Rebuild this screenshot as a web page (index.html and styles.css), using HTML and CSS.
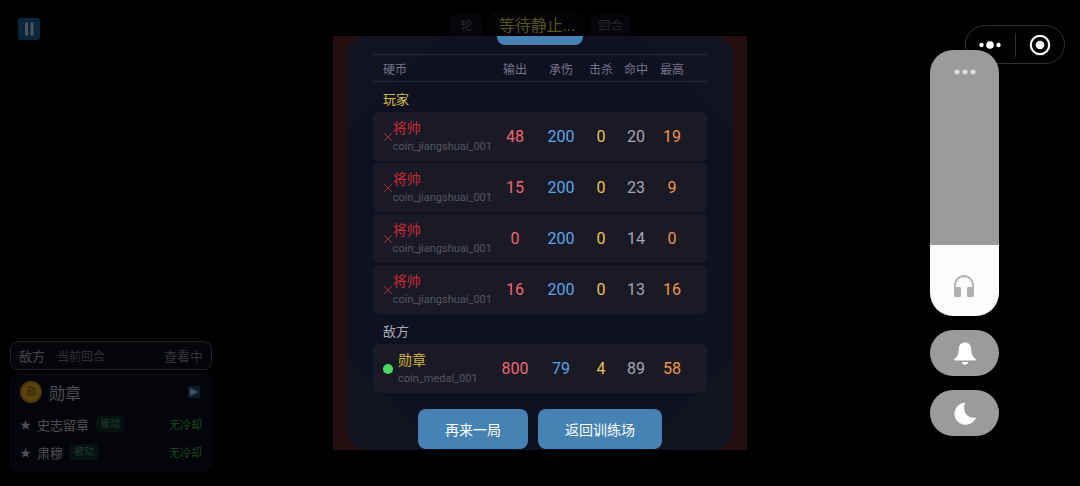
FILE: index.html
```html
<!DOCTYPE html>
<html lang="zh-CN">
  <head>
    <meta charset="UTF-8" />
    <meta name="viewport" content="width=device-width, initial-scale=1.0" />
    <title>训练场</title>
    <link rel="stylesheet" href="styles.css">
  </head>
  <body>
    <div class="screen">
      <aside class="left">
        <button class="pause" aria-label="暂停">
          <svg width="12" height="14" viewBox="0 0 12 14">
            <path d="M2 0.500h3v13H2zM7.500 0.500h3v13h-3z" fill="currentColor" />
          </svg>
        </button>

        <section class="enemy">
          <div class="turn-bar">
            <span class="turn-side">敌方</span>
            <span class="turn-label">当前回合</span>
            <span class="turn-state">查看中</span>
          </div>
          <div class="coin-card">
            <div class="coin-head">
              <span class="coin-badge">勋</span>
              <span class="coin-title">勋章</span>
              <button class="expand" aria-label="展开">
                <svg width="8" height="8" viewBox="0 0 8 8">
                  <path d="M0 0l8 4-8 4z" fill="currentColor" />
                </svg>
              </button>
            </div>
            <div class="skill">
              <span class="star">★</span>
              <span>史志留章</span>
              <span class="tag">被动</span>
              <span class="cooldown">无冷却</span>
            </div>
            <div class="skill">
              <span class="star">★</span>
              <span>肃穆</span>
              <span class="tag">被动</span>
              <span class="cooldown">无冷却</span>
            </div>
          </div>
        </section>
      </aside>

      <main class="center">
        <div class="status">
          <span class="pill">轮</span>
          <span class="pill pill-main">等待静止...</span>
          <span class="pill">回合</span>
        </div>

        <div class="board">
          <div class="result">
            <button class="btn btn-tab" aria-label="统计"></button>
            <table class="stats">
              <thead>
                <tr>
                  <th class="name">硬币</th>
                  <th class="wide">输出</th>
                  <th class="wide">承伤</th>
                  <th class="kill">击杀</th>
                  <th class="hit">命中</th>
                  <th class="last">最高</th>
                </tr>
              </thead>
              <tbody>
                <tr class="group player">
                  <th colspan="6">玩家</th>
                </tr>
                <tr class="row dead">
                  <td class="name">
                    <div class="coin">
                      <svg class="mark" width="10" height="10" viewBox="0 0 10 10"><path d="M1 1l8 8M9 1l-8 8" /></svg>
                      <div><b>将帅</b><small>coin_jiangshuai_001</small></div>
                    </div>
                  </td>
                  <td class="out">48</td>
                  <td class="taken">200</td>
                  <td class="kills">0</td>
                  <td class="hits">20</td>
                  <td class="max last">19</td>
                </tr>
                <tr class="row dead">
                  <td class="name">
                    <div class="coin">
                      <svg class="mark" width="10" height="10" viewBox="0 0 10 10"><path d="M1 1l8 8M9 1l-8 8" /></svg>
                      <div><b>将帅</b><small>coin_jiangshuai_001</small></div>
                    </div>
                  </td>
                  <td class="out">15</td>
                  <td class="taken">200</td>
                  <td class="kills">0</td>
                  <td class="hits">23</td>
                  <td class="max last">9</td>
                </tr>
                <tr class="row dead">
                  <td class="name">
                    <div class="coin">
                      <svg class="mark" width="10" height="10" viewBox="0 0 10 10"><path d="M1 1l8 8M9 1l-8 8" /></svg>
                      <div><b>将帅</b><small>coin_jiangshuai_001</small></div>
                    </div>
                  </td>
                  <td class="out">0</td>
                  <td class="taken">200</td>
                  <td class="kills">0</td>
                  <td class="hits">14</td>
                  <td class="max last">0</td>
                </tr>
                <tr class="row dead">
                  <td class="name">
                    <div class="coin">
                      <svg class="mark" width="10" height="10" viewBox="0 0 10 10"><path d="M1 1l8 8M9 1l-8 8" /></svg>
                      <div><b>将帅</b><small>coin_jiangshuai_001</small></div>
                    </div>
                  </td>
                  <td class="out">16</td>
                  <td class="taken">200</td>
                  <td class="kills">0</td>
                  <td class="hits">13</td>
                  <td class="max last">16</td>
                </tr>
                <tr class="group">
                  <th colspan="6">敌方</th>
                </tr>
                <tr class="row alive">
                  <td class="name">
                    <div class="coin">
                      <span class="dot"></span>
                      <div><b>勋章</b><small>coin_medal_001</small></div>
                    </div>
                  </td>
                  <td class="out">800</td>
                  <td class="taken">79</td>
                  <td class="kills">4</td>
                  <td class="hits">89</td>
                  <td class="max last">58</td>
                </tr>
              </tbody>
            </table>
            <div class="actions">
              <button class="btn">再来一局</button>
              <button class="btn">返回训练场</button>
            </div>
          </div>
        </div>
      </main>

      <aside class="right">
        <div class="capsule">
          <button aria-label="更多">
            <svg width="22" height="8" viewBox="0 0 22 8" fill="currentColor">
              <circle cx="2.5" cy="4" r="2.2" />
              <circle cx="11" cy="4" r="3.8" />
              <circle cx="19.5" cy="4" r="2.2" />
            </svg>
          </button>
          <button aria-label="关闭">
            <svg width="22" height="22" viewBox="0 0 22 22">
              <circle cx="11" cy="11" r="9.2" fill="none" stroke="currentColor" stroke-width="2.2" />
              <circle cx="11" cy="11" r="4.3" fill="currentColor" />
            </svg>
          </button>
        </div>

        <div class="sound">
          <div class="volume">
            <input class="level" type="range" min="0" max="100" value="27" aria-label="音量" />
            <button class="volume-more" aria-label="更多音量选项">
              <svg width="22" height="6" viewBox="0 0 22 6" fill="currentColor">
                <circle cx="3" cy="3" r="2.5" />
                <circle cx="11" cy="3" r="2.5" />
                <circle cx="19" cy="3" r="2.5" />
              </svg>
            </button>
            <svg class="headphones" width="20" height="22" viewBox="0 0 20 22">
              <path d="M1 19V10a9 9 0 0 1 18 0v9" fill="none" stroke="currentColor" stroke-width="2" />
              <path d="M0 12h5.500a1.500 1.500 0 0 1 1.500 1.500v7a1.500 1.500 0 0 1-1.500 1.500H2a2 2 0 0 1-2-2zM20 12h-5.500a1.500 1.500 0 0 0-1.500 1.500v7a1.500 1.500 0 0 0 1.500 1.500H18a2 2 0 0 0 2-2z" fill="currentColor" />
            </svg>
          </div>
          <button class="sound-btn" aria-label="铃声">
            <svg width="22" height="23" viewBox="0 0 22 23" fill="currentColor">
              <path d="M11 0.500c3.800 0 6.200 2.600 6.200 6.200 0 4.800 0.800 7.300 4.300 10 0.700 0.700 0.400 1.800-0.500 1.800H1c-0.900 0-1.200-1.100-0.500-1.800 3.500-2.700 4.300-5.200 4.300-10C4.800 3.100 7.200 0.500 11 0.500z" />
              <path d="M7.700 20h6.600c-0.500 1.700-1.700 2.700-3.300 2.700S8.200 21.700 7.700 20z" />
            </svg>
          </button>
          <button class="sound-btn" aria-label="勿扰">
            <svg width="22" height="23" viewBox="0 0 22 23" fill="currentColor">
              <path d="M10 0.800c0.600-0.200 1 0.200 0.800 0.800-2.600 7.500 2.200 15 10 14.200 0.700-0.100 1.200 0.400 0.800 1C19.500 20.500 15.800 22.700 11.500 22.700 5.200 22.700 0.500 18 0.500 11.800 0.500 6.500 4.500 1.700 10 0.800z" />
            </svg>
          </button>
        </div>
      </aside>
    </div>
  </body>
</html>
```
FILE: styles.css
```css
* {
  box-sizing: border-box;
}

body {
  margin: 0;
  background: #000;
  color: #fff;
  font-family: Roboto, "Noto Sans CJK SC", sans-serif;
}

button {
  display: flex;
  align-items: center;
  justify-content: center;
  margin: 0;
  padding: 0;
  border: 0;
  background: none;
  color: inherit;
  font: inherit;
}

.screen {
  position: relative;
  display: grid;
  grid-template-columns: 1fr 414px 1fr;
  min-height: 100vh;
}

/* left side */
.left {
  display: flex;
  flex-direction: column;
  justify-content: space-between;
  padding: 18px 10px 14px;
}

.pause {
  width: 22px;
  height: 22px;
  margin-left: 8px;
  border-radius: 3px;
  background: #0e263a;
  color: #4a5660;
}

.enemy {
  display: flex;
  flex-direction: column;
  gap: 4px;
  width: 202px;
}

.turn-bar {
  display: flex;
  align-items: center;
  height: 29px;
  padding: 0 8px;
  border: 1px solid #222228;
  border-radius: 8px;
  background: #05060c;
  color: #48484e;
  font-size: 13px;
}

.turn-label {
  margin-left: 12px;
  color: #303036;
  font-size: 12px;
}

.turn-state {
  margin-left: auto;
  color: #34343a;
}

.coin-card {
  padding: 0 9px 5px;
  border: 1px solid #070810;
  border-radius: 8px;
  background: #04050b;
  color: #4e4e53;
}

.coin-head {
  display: flex;
  align-items: center;
  height: 35px;
  border-bottom: 1px solid #090a10;
}

.coin-badge {
  width: 22px;
  height: 22px;
  border: 2px solid #4a370a;
  border-radius: 50%;
  background: #5c450c;
  color: #2b2008;
  font-size: 10px;
  line-height: 18px;
  text-align: center;
}

.coin-title {
  margin-left: 7px;
  font-size: 16px;
}

.expand {
  width: 12px;
  height: 12px;
  margin-left: auto;
  margin-right: 2px;
  background: #0d1d2c;
  color: #46515c;
}

.skill {
  display: flex;
  align-items: center;
  height: 28px;
  font-size: 13px;
}

.star {
  width: 17px;
  font-size: 11px;
}

.tag {
  margin-left: 7px;
  padding: 0 4px;
  border-radius: 3px;
  background: #07110f;
  color: #1d3b2d;
  font-size: 10px;
  line-height: 16px;
}

.cooldown {
  margin-left: auto;
  color: #1a4a20;
  font-size: 11px;
}

/* turn status above the board */
.status {
  display: flex;
  align-items: flex-start;
  justify-content: center;
  gap: 6px;
  height: 36px;
  padding-top: 11px;
}

.pill {
  min-width: 34px;
  height: 22px;
  margin-top: 3px;
  padding: 0 8px;
  border-radius: 8px 8px 0 0;
  background: #06060a;
  color: #26262c;
  font-size: 12px;
  line-height: 24px;
  text-align: center;
}

.pill-main {
  min-width: 95px;
  height: 25px;
  margin-top: 0;
  background: #040407;
  color: #58521f;
  font-size: 16px;
  line-height: 30px;
}

.board {
  height: 414px;
  padding: 0 14px;
  overflow: hidden;
  background: #240f10;
}

.result {
  display: flex;
  flex-direction: column;
  align-items: center;
  height: 100%;
  border-radius: 20px;
  background:
    linear-gradient(45deg, #12141f 65px, transparent 66px),
    linear-gradient(135deg, #111320 65px, transparent 66px),
    linear-gradient(225deg, #111320 65px, transparent 66px),
    linear-gradient(315deg, #12141f 65px, transparent 66px),
    #0f1120;
}

.btn {
  flex: none;
  height: 40px;
  padding: 0 27px;
  border-radius: 8px;
  background: #4682b4;
  color: #fff;
  font-size: 14px;
}

.btn-tab {
  width: 86px;
  margin-top: -31px;
}

.stats {
  width: 334px;
  margin-top: 7px;
  border-spacing: 0 2px;
  table-layout: fixed;
}

.stats th,
.stats td {
  padding: 0;
  font-weight: normal;
  text-align: center;
}

.stats thead th {
  height: 28px;
  padding-top: 4px;
  border-top: 1px solid #272836;
  border-bottom: 1px solid #272836;
  color: #74748a;
  font-size: 12px;
  line-height: 16px;
}

.stats .name {
  padding-left: 10px;
  text-align: left;
}

.stats .wide {
  width: 46px;
}

.stats .kill {
  width: 34px;
}

.stats .hit {
  width: 36px;
}

.stats .last {
  width: 53px;
  padding-right: 17px;
}

.stats .group th {
  height: 26px;
  padding: 6px 0 0 10px;
  color: #a9a9b4;
  font-size: 13px;
  line-height: 18px;
  text-align: left;
}

.stats .player th {
  color: #d4bd45;
}

.row td {
  height: 49px;
  background: #1a1a27;
  font-size: 16px;
}

.row td:first-child {
  border-radius: 5px 0 0 5px;
}

.row td:last-child {
  border-radius: 0 5px 5px 0;
}

.coin {
  display: flex;
  align-items: center;
  white-space: nowrap;
}

.coin b {
  display: block;
  font-size: 14px;
  font-weight: normal;
  line-height: 20px;
}

.coin small {
  display: block;
  color: #55555f;
  font-size: 11px;
  line-height: 18px;
}

.mark {
  fill: none;
  stroke: #b5323b;
  stroke-width: 1;
}

.dead b {
  color: #c92a34;
}

.alive b {
  color: #d4b53c;
}

.dot {
  width: 10px;
  height: 10px;
  margin-right: 5px;
  border-radius: 50%;
  background: #4cd964;
}

.out {
  color: #f0666e;
}

.taken {
  color: #5ba6ea;
}

.kills {
  color: #ecc44c;
}

.hits {
  color: #a6a6b0;
}

.max {
  color: #ee9644;
}

.actions {
  display: flex;
  gap: 10px;
  margin-top: 14px;
}

/* right side */
.right {
  display: flex;
  justify-content: flex-end;
  align-items: flex-start;
  padding: 25px 15px 0 0;
}

.capsule {
  display: flex;
  align-items: center;
  width: 100px;
  height: 39px;
  border: 1px solid #333;
  border-radius: 20px;
}

.capsule button {
  flex: 1;
  height: 24px;
}

.capsule button + button {
  border-left: 1px solid #333;
}

/* system volume panel, floats over the capsule */
.sound {
  position: absolute;
  top: 50px;
  right: 81px;
  display: flex;
  flex-direction: column;
  gap: 14px;
  width: 69px;
}

.volume {
  position: relative;
  height: 266px;
  border-radius: 23px;
  overflow: hidden;
}

.level {
  display: block;
  width: 100%;
  height: 100%;
  margin: 0;
  appearance: none;
  writing-mode: vertical-lr;
  direction: rtl;
  background: linear-gradient(to top, #fcfcfc 71px, #9a9b9d 71px);
}

.level::-webkit-slider-thumb {
  appearance: none;
  width: 69px;
  height: 1px;
  background: transparent;
}

.volume-more {
  position: absolute;
  top: 19px;
  left: 0;
  width: 100%;
  color: #dcdcdd;
}

.headphones {
  position: absolute;
  bottom: 19px;
  left: 24px;
  color: #b0b0b1;
  pointer-events: none;
}

.sound-btn {
  height: 46px;
  border-radius: 23px;
  background: #9a9b9d;
}
```
